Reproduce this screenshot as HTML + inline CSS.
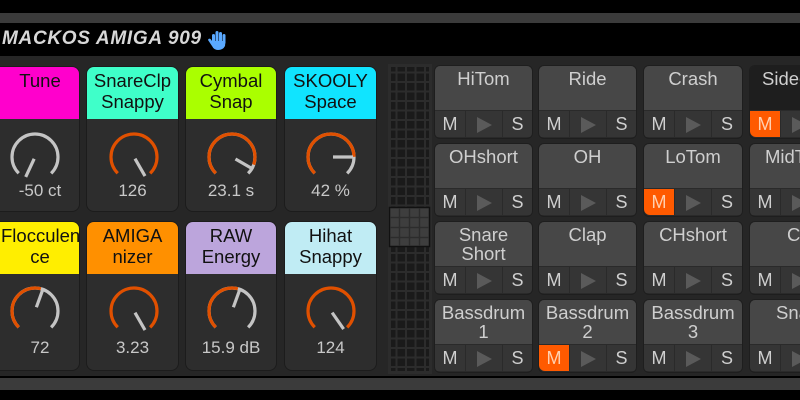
<!DOCTYPE html>
<html><head><style>
*{margin:0;padding:0;box-sizing:border-box}
html,body{width:800px;height:400px;overflow:hidden;background:#000}
body{font-family:"Liberation Sans",sans-serif}
#w{position:relative;width:800px;height:400px;overflow:hidden}
.abs{position:absolute}
.tile{position:absolute;background:#2d2d2d;border:1px solid #1c1c1c;border-radius:8px;overflow:hidden}
.hdr{position:absolute;left:0;right:0;top:0;height:52px;color:#111;font-size:18.5px;line-height:21px;text-align:center;padding-top:3px;white-space:nowrap}
.val{position:absolute;left:0;right:0;color:#c8c8c8;font-size:17px;text-align:center}
.pad{position:absolute;background:#2a2a2a;border:1px solid #1e1e1e;border-radius:6px;overflow:hidden}
.pn{position:absolute;left:0;right:0;top:0;height:44px;background:#474747;color:#cfcfcf;font-size:18.5px;line-height:19px;text-align:center;padding-top:3px;white-space:nowrap}
.row{position:absolute;left:0;right:0;top:45px;height:26px;color:#cfcfcf;font-size:18px}
.m,.p,.s{position:absolute;top:0;height:26px;background:#353535;line-height:26px;text-align:center}
.m{left:0;width:30px}.p{left:31px;width:36px}.s{left:68px;right:0}
.m.on{background:#ff5a00;color:#ffd0b0;border-radius:0 0 0 6px}
.tri{position:absolute;left:11px;top:6px;width:0;height:0;border-left:15px solid #5a5a5a;border-top:8px solid transparent;border-bottom:8px solid transparent}
</style></head><body><div id="w">
<div class="abs" style="left:0;top:13px;width:800px;height:10px;background:#3b3b3b"></div>
<div class="abs" style="left:0;top:23px;width:800px;height:33px;background:#000"></div>
<div class="abs" style="left:2px;top:28px;color:#d8d8d8;font-size:19px;font-weight:bold;font-style:italic;letter-spacing:0.7px;white-space:nowrap">MACKOS AMIGA 909</div>
<svg class="abs" style="left:207px;top:29px" width="22" height="22" viewBox="0 0 22 22">
<g fill="#5aa9ff"><rect x="5" y="5" width="3" height="10" rx="1.5"/><rect x="8.5" y="2" width="3" height="12" rx="1.5"/><rect x="12" y="3" width="3" height="12" rx="1.5"/><rect x="15.5" y="5" width="3" height="10" rx="1.5"/><path d="M5 12 L18.5 12 L18 17 Q16 21 11 21 Q7 21 5 17 L1 11 Q1.5 9 3.5 10 Z"/></g></svg>
<div class="abs" style="left:0;top:56px;width:800px;height:320px;background:#262626"></div>
<div class="abs" style="left:0;top:378px;width:800px;height:12px;background:#3b3b3b"></div>
<div class="abs" style="left:0;top:391px;width:800px;height:9px;background:#000"></div>

<div class="tile" style="left:-10px;top:66px;width:90px;height:146px"><div class="hdr" style="background:#ff00cc;padding-left:10px">Tune</div><div class="val" style="top:114px;padding-left:10px">-50 ct</div></div>
<div class="tile" style="left:86px;top:66px;width:93px;height:146px"><div class="hdr" style="background:#3fffc9">SnareClp<br>Snappy</div><div class="val" style="top:114px">126</div></div>
<div class="tile" style="left:185px;top:66px;width:92px;height:146px"><div class="hdr" style="background:#aaff00">Cymbal<br>Snap</div><div class="val" style="top:114px">23.1 s</div></div>
<div class="tile" style="left:284px;top:66px;width:93px;height:146px"><div class="hdr" style="background:#10e4ff">SKOOLY<br>Space</div><div class="val" style="top:114px">42 %</div></div>

<div class="tile" style="left:-10px;top:221px;width:90px;height:150px"><div class="hdr" style="background:#ffee00;padding-left:10px">Flocculen<br>ce</div><div class="val" style="top:116px;padding-left:10px">72</div></div>
<div class="tile" style="left:86px;top:221px;width:93px;height:150px"><div class="hdr" style="background:#ff9000">AMIGA<br>nizer</div><div class="val" style="top:116px">3.23</div></div>
<div class="tile" style="left:185px;top:221px;width:92px;height:150px"><div class="hdr" style="background:#bca5dc">RAW<br>Energy</div><div class="val" style="top:116px">15.9 dB</div></div>
<div class="tile" style="left:284px;top:221px;width:93px;height:150px"><div class="hdr" style="background:#c0ecf4">Hihat<br>Snappy</div><div class="val" style="top:116px">124</div></div>

<svg class="abs" style="left:0;top:0" width="380" height="400">
<g fill="none" stroke-width="3.2">
<g transform="translate(35,157)"><circle r="23" stroke="#c4c4c4" stroke-dasharray="108.4 200" transform="rotate(135)"/><line x1="0" y1="0" x2="0" y2="-20" stroke="#c4c4c4" transform="rotate(-155) translate(0,-2)"/></g>
<g transform="translate(134,157)"><circle r="23" stroke="#e05000" stroke-dasharray="108.4 200" transform="rotate(135)"/><line x1="0" y1="-2" x2="0" y2="-22" stroke="#c4c4c4" transform="rotate(150)"/></g>
<g transform="translate(232,157)"><circle r="23" stroke="#c4c4c4" stroke-dasharray="108.4 200" transform="rotate(135)"/><circle r="23" stroke="#e05000" stroke-dasharray="98 200" transform="rotate(135)"/><line x1="0" y1="-4" x2="0" y2="-24" stroke="#c4c4c4" transform="rotate(120)"/></g>
<g transform="translate(331,157)"><circle r="23" stroke="#c4c4c4" stroke-dasharray="108.4 200" transform="rotate(135)"/><circle r="23" stroke="#e05000" stroke-dasharray="90 200" transform="rotate(135)"/><line x1="0" y1="-2" x2="0" y2="-22" stroke="#c4c4c4" transform="rotate(90)"/></g>
<g transform="translate(35,311)"><circle r="23" stroke="#c4c4c4" stroke-dasharray="108.4 200" transform="rotate(135)"/><circle r="23" stroke="#e05000" stroke-dasharray="60 200" transform="rotate(135)"/><line x1="0" y1="-4" x2="0" y2="-24" stroke="#c4c4c4" transform="rotate(20)"/></g>
<g transform="translate(134,311)"><circle r="23" stroke="#e05000" stroke-dasharray="108.4 200" transform="rotate(135)"/><line x1="0" y1="-2" x2="0" y2="-22" stroke="#c4c4c4" transform="rotate(150)"/></g>
<g transform="translate(232,311)"><circle r="23" stroke="#c4c4c4" stroke-dasharray="108.4 200" transform="rotate(135)"/><circle r="23" stroke="#e05000" stroke-dasharray="60 200" transform="rotate(135)"/><line x1="0" y1="-4" x2="0" y2="-24" stroke="#c4c4c4" transform="rotate(20)"/></g>
<g transform="translate(331,311)"><circle r="23" stroke="#e05000" stroke-dasharray="108.4 200" transform="rotate(135)"/><line x1="0" y1="-2" x2="0" y2="-22" stroke="#c4c4c4" transform="rotate(145)"/></g>
</g>
</svg>

<svg class="abs" style="left:388px;top:64px" width="44" height="310">
<defs><pattern id="g" width="9.5" height="9.5" patternUnits="userSpaceOnUse"><rect x="0" y="0" width="7.5" height="7.5" fill="#1a1a1a"/></pattern></defs>
<rect x="0" y="0" width="44" height="310" fill="#2c2c2c"/>
<rect x="3" y="3" width="38" height="304" fill="url(#g)"/>
<rect x="1.5" y="143.5" width="40" height="39" fill="#3e3e3e" stroke="#111" stroke-width="1.5"/>
<g stroke="#2c2c2c" stroke-width="1.5"><line x1="11.5" y1="144" x2="11.5" y2="182"/><line x1="21.5" y1="144" x2="21.5" y2="182"/><line x1="31.5" y1="144" x2="31.5" y2="182"/><line x1="2" y1="153.5" x2="41" y2="153.5"/><line x1="2" y1="163.5" x2="41" y2="163.5"/><line x1="2" y1="173.5" x2="41" y2="173.5"/></g>
</svg>

<div class="pad" style="left:434px;top:65px;width:99px;height:74px"><div class="pn">HiTom</div><div class="row"><div class="m">M</div><div class="p"><div class="tri"></div></div><div class="s">S</div></div></div>
<div class="pad" style="left:538px;top:65px;width:99px;height:74px"><div class="pn">Ride</div><div class="row"><div class="m">M</div><div class="p"><div class="tri"></div></div><div class="s">S</div></div></div>
<div class="pad" style="left:643px;top:65px;width:100px;height:74px"><div class="pn">Crash</div><div class="row"><div class="m">M</div><div class="p"><div class="tri"></div></div><div class="s">S</div></div></div>
<div class="pad" style="left:749px;top:65px;width:51px;height:74px;border-right:none;border-radius:6px 0 0 6px"><div class="pn" style="background:#1e1e1e;text-align:left;padding-left:12px">Sidechain</div><div class="row"><div class="m on">M</div><div class="p"><div class="tri"></div></div></div></div>

<div class="pad" style="left:434px;top:143px;width:99px;height:74px"><div class="pn">OHshort</div><div class="row"><div class="m">M</div><div class="p"><div class="tri"></div></div><div class="s">S</div></div></div>
<div class="pad" style="left:538px;top:143px;width:99px;height:74px"><div class="pn">OH</div><div class="row"><div class="m">M</div><div class="p"><div class="tri"></div></div><div class="s">S</div></div></div>
<div class="pad" style="left:643px;top:143px;width:100px;height:74px"><div class="pn">LoTom</div><div class="row"><div class="m on">M</div><div class="p"><div class="tri"></div></div><div class="s">S</div></div></div>
<div class="pad" style="left:749px;top:143px;width:51px;height:74px;border-right:none;border-radius:6px 0 0 6px"><div class="pn" style="text-align:left;padding-left:15px">MidTom</div><div class="row"><div class="m">M</div><div class="p"><div class="tri"></div></div></div></div>

<div class="pad" style="left:434px;top:221px;width:99px;height:74px"><div class="pn">Snare<br>Short</div><div class="row"><div class="m">M</div><div class="p"><div class="tri"></div></div><div class="s">S</div></div></div>
<div class="pad" style="left:538px;top:221px;width:99px;height:74px"><div class="pn">Clap</div><div class="row"><div class="m">M</div><div class="p"><div class="tri"></div></div><div class="s">S</div></div></div>
<div class="pad" style="left:643px;top:221px;width:100px;height:74px"><div class="pn">CHshort</div><div class="row"><div class="m">M</div><div class="p"><div class="tri"></div></div><div class="s">S</div></div></div>
<div class="pad" style="left:749px;top:221px;width:51px;height:74px;border-right:none;border-radius:6px 0 0 6px"><div class="pn" style="text-align:left;padding-left:37px">CHlong</div><div class="row"><div class="m">M</div><div class="p"><div class="tri"></div></div></div></div>

<div class="pad" style="left:434px;top:299px;width:99px;height:74px"><div class="pn">Bassdrum<br>1</div><div class="row"><div class="m">M</div><div class="p"><div class="tri"></div></div><div class="s">S</div></div></div>
<div class="pad" style="left:538px;top:299px;width:99px;height:74px"><div class="pn">Bassdrum<br>2</div><div class="row"><div class="m on">M</div><div class="p"><div class="tri"></div></div><div class="s">S</div></div></div>
<div class="pad" style="left:643px;top:299px;width:100px;height:74px"><div class="pn">Bassdrum<br>3</div><div class="row"><div class="m">M</div><div class="p"><div class="tri"></div></div><div class="s">S</div></div></div>
<div class="pad" style="left:749px;top:299px;width:51px;height:74px;border-right:none;border-radius:6px 0 0 6px"><div class="pn" style="text-align:left;padding-left:26px">Snare</div><div class="row"><div class="m">M</div><div class="p"><div class="tri"></div></div></div></div>
</div></body></html>
